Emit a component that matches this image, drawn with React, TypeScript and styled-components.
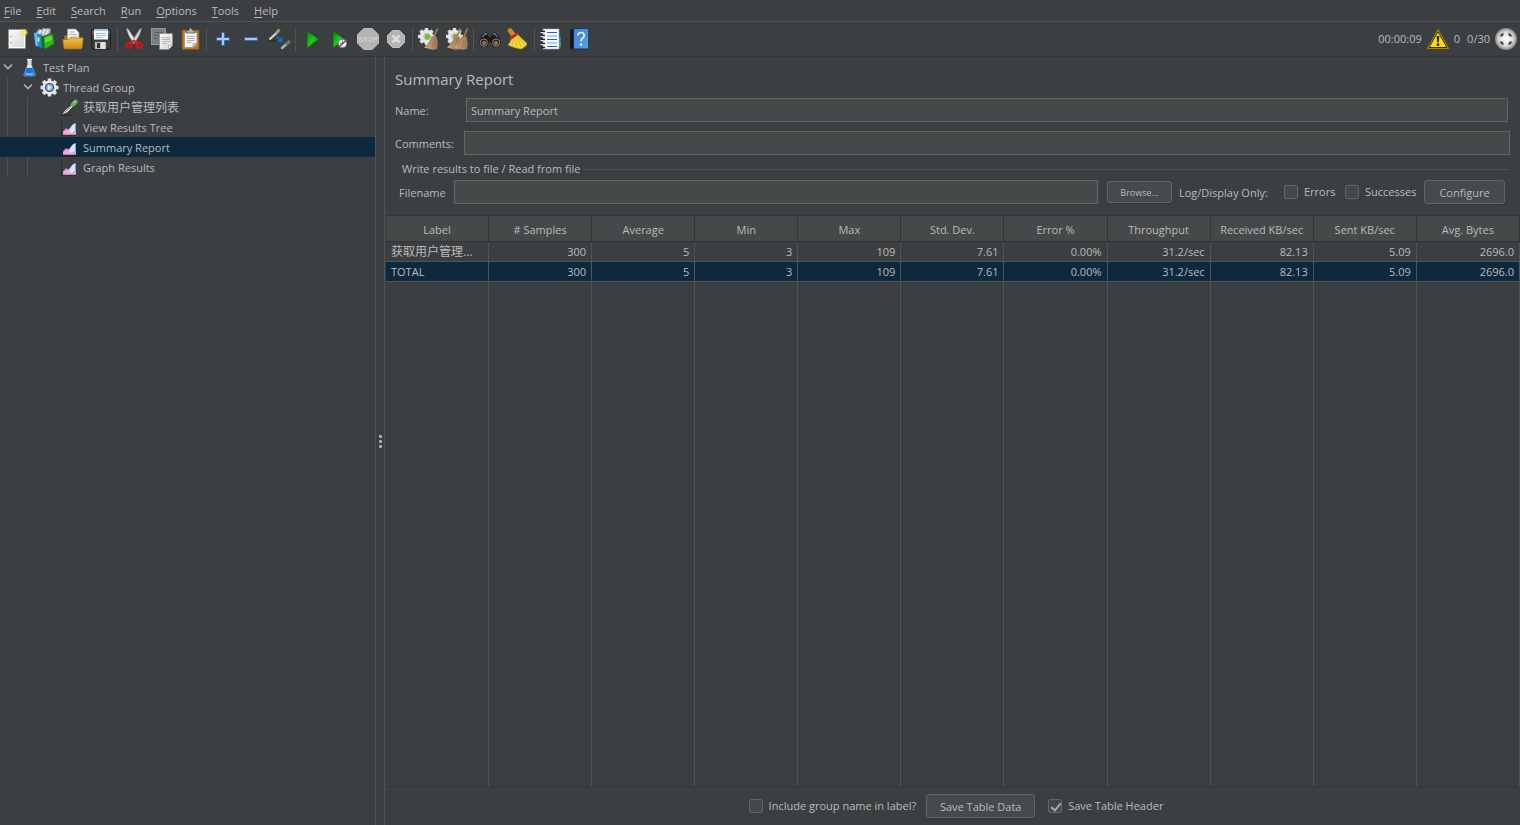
import React from "react";
import styled, { createGlobalStyle, css } from "styled-components";

const color = {
  bg: "#3c3f41",
  text: "#bbbbbb",
  line: "#515355",
  dark: "#323537",
  field: "#45494a",
  fieldLine: "#646666",
  selected: "#0d293e",
};

const GlobalStyle = createGlobalStyle`
  * { box-sizing: border-box; }
  body {
    margin: 0;
    background: ${color.bg};
    color: ${color.text};
    font: 11px/16px "Open Sans", "Noto Sans CJK SC", sans-serif;
  }
  button, input { font: inherit; color: inherit; }
  svg { display: block; flex: none; }
`;

const Window = styled.div`
  display: flex;
  flex-direction: column;
  min-height: 100vh;
`;

const MenuBar = styled.nav`
  display: flex;
  gap: 15px;
  height: 22px;
  padding: 0 4px;
  border-bottom: 1px solid ${color.line};
`;

const MenuButton = styled.button`
  padding: 0;
  border: 0;
  background: none;
  line-height: 20px;
  u { text-underline-offset: 2px; }
`;

const Toolbar = styled.div`
  display: flex;
  align-items: center;
  height: 35px;
  padding: 0 2px 0 3px;
  border-bottom: 1px solid ${color.dark};
`;

const ToolButton = styled.button`
  display: flex;
  justify-content: center;
  width: 28px;
  padding: 0;
  border: 0;
  background: none;
`;

const ToolSeparator = styled.span`
  width: 1px;
  height: 25px;
  margin: 0 2px;
  background: ${color.line};
`;

const Status = styled.div`
  display: flex;
  align-items: center;
  gap: 4px;
  margin-left: auto;
  line-height: 24px;
`;

const StatusCounts = styled.span`
  display: flex;
  gap: 7px;
`;

const Body = styled.div`
  display: flex;
  flex: 1;
`;

const Tree = styled.ul`
  width: 376px;
  flex: none;
  margin: 0;
  padding: 0;
  list-style: none;
  border-right: 1px solid ${color.line};
`;

const TreeRow = styled.li<{ $selected?: boolean }>`
  display: flex;
  align-items: center;
  height: 20px;
  background: ${(p) => (p.$selected ? color.selected : "transparent")};
`;

const Guide = styled.span<{ $hidden?: boolean }>`
  align-self: stretch;
  width: 13px;
  margin-left: 7px;
  border-left: 1px solid ${(p) => (p.$hidden ? "transparent" : color.line)};
`;

const Toggle = styled.span`
  width: 20px;
  padding-left: 3px;
`;

const NodeIcon = styled.span`
  width: 20px;
  margin-right: 3px;
`;

const NodeLabel = styled.span`
  padding-top: 2px;
`;

const Cjk = styled.span`
  font-size: 12px;
`;

const Splitter = styled.div`
  display: flex;
  flex-direction: column;
  align-items: center;
  justify-content: center;
  gap: 2px;
  width: 8px;
`;

const Dot = styled.span`
  width: 3px;
  height: 3px;
  border-radius: 1px;
  background: #afb1b3;
`;

const Panel = styled.main`
  display: flex;
  flex: 1;
  flex-direction: column;
  min-width: 0;
  padding-left: 1px;
  border-left: 1px solid ${color.line};
`;

const Form = styled.form`
  padding: 10px 10px 11px 9px;
`;

const Title = styled.h1`
  margin: 0 0 7px;
  font-size: 15px;
  font-weight: 400;
  line-height: 24px;
`;

const FieldRow = styled.div<{ $label: number; $end?: number }>`
  display: flex;
  align-items: center;
  margin-bottom: 9px;
  padding-right: ${(p) => p.$end ?? 0}px;
  label {
    flex: none;
    width: ${(p) => p.$label}px;
    padding-top: 2px;
  }
`;

const TextInput = styled.input`
  flex: 1;
  min-width: 0;
  height: 24px;
  padding: 0 4px;
  border: 1px solid ${color.fieldLine};
  border-radius: 0;
  background: ${color.field};
  outline: none;
`;

const FileGroup = styled.fieldset`
  min-width: 0;
  margin: -4px 1px 0 2px;
  padding: 2px 4px 0 2px;
  border: 0;
  border-top: 1px solid ${color.line};
  legend { padding: 0 3px; line-height: 18px; }
`;

const FileRow = styled.div`
  display: flex;
  align-items: center;
`;

const FileLabel = styled.label`
  width: 55px;
  padding-top: 2px;
`;

const PushButton = styled.button<{ $width: number; $small?: boolean }>`
  width: ${(p) => p.$width}px;
  height: 24px;
  padding: 1px 0 0;
  border: 1px solid ${color.fieldLine};
  border-radius: 3px;
  background: #454a4c;
  box-shadow: 0 1px 1px #35383a;
  line-height: 22px;
  ${(p) =>
    p.$small &&
    css`
      height: 22px;
      margin: 0 7px 0 9px;
      font-size: 9px;
      line-height: 20px;
    `}
`;

const LogLabel = styled.span`
  width: 105px;
  padding-top: 2px;
`;

const CheckLabel = styled.label<{ $width?: number }>`
  display: flex;
  align-items: center;
  gap: 6px;
  width: ${(p) => (p.$width ? `${p.$width}px` : "auto")};
`;

const Check = styled.input`
  position: relative;
  flex: none;
  width: 14px;
  height: 14px;
  margin: 0;
  appearance: none;
  border: 1px solid ${color.fieldLine};
  border-radius: 2px;
  background: #43494a;
  &:checked::before {
    content: "";
    position: absolute;
    left: 4px;
    top: 1px;
    width: 4px;
    height: 8px;
    border: solid #a7a9aa;
    border-width: 0 2px 2px 0;
    transform: rotate(40deg);
  }
`;

const TableArea = styled.div`
  display: flex;
  flex: 1;
  border-top: 1px solid ${color.dark};
  border-bottom: 1px solid ${color.dark};
`;

const DataTable = styled.table`
  width: 100%;
  table-layout: fixed;
  border-collapse: separate;
  border-spacing: 0;
  th {
    height: 26px;
    padding: 2px 0 0;
    border-right: 1px solid ${color.dark};
    border-bottom: 1px solid ${color.dark};
    background: ${color.field};
    font-weight: 400;
  }
  td {
    padding: 0 5px;
    border-right: 1px solid ${color.line};
    text-align: right;
    white-space: nowrap;
  }
  td:first-child { text-align: left; }
`;

const DataRow = styled.tr<{ $selected?: boolean }>`
  background: ${(p) => (p.$selected ? color.selected : "transparent")};
  td {
    height: 20px;
    border-bottom: 1px solid ${color.line};
  }
`;

const Footer = styled.footer`
  display: flex;
  align-items: center;
  justify-content: center;
  height: 38px;
  gap: 10px;
  padding-left: 6px;
  label:last-child { margin-left: 3px; }
`;

type IconProps = { children: React.ReactNode; size?: number };
const Icon = ({ children, size = 24 }: IconProps) => (
  <svg width={size} height={size} viewBox={`0 0 ${size} ${size}`} aria-hidden="true">
    {children}
  </svg>
);

const Definitions = styled.svg`
  position: absolute;
`;

const Gradients = () => (
  <Definitions width="0" height="0" aria-hidden="true">
    <defs>
      <linearGradient id="paper" x1="0" y1="0" x2="1" y2="1">
        <stop offset="0" stopColor="#fafafa" />
        <stop offset="1" stopColor="#d6d6d4" />
      </linearGradient>
      <linearGradient id="gold" x1="0" y1="0" x2="0" y2="1">
        <stop offset="0" stopColor="#f0c250" />
        <stop offset="1" stopColor="#c88a10" />
      </linearGradient>
      <linearGradient id="play" x1="0" y1="0" x2="1" y2="1">
        <stop offset="0" stopColor="#0a7a10" />
        <stop offset="0.5" stopColor="#1fc81f" />
        <stop offset="1" stopColor="#075c0a" />
      </linearGradient>
      <linearGradient id="straw" x1="0" y1="0" x2="1" y2="0">
        <stop offset="0" stopColor="#d2ab80" />
        <stop offset="1" stopColor="#a47a52" />
      </linearGradient>
      <linearGradient id="book" x1="0" y1="0" x2="1" y2="1">
        <stop offset="0" stopColor="#3f7fd0" />
        <stop offset="1" stopColor="#5aa0ea" />
      </linearGradient>
      <radialGradient id="ball">
        <stop offset="0" stopColor="#ffffff" />
        <stop offset="0.65" stopColor="#dcdcdc" />
        <stop offset="1" stopColor="#7f8183" />
      </radialGradient>
      <radialGradient id="sun">
        <stop offset="0" stopColor="#fffde0" />
        <stop offset="0.5" stopColor="#f4e04a" />
        <stop offset="1" stopColor="#e8d030" stopOpacity="0.2" />
      </radialGradient>
    </defs>
  </Definitions>
);

const NewIcon = () => (
  <Icon>
    <rect x="3.5" y="2.5" width="17" height="19" rx="0.5" fill="url(#paper)" stroke="#8d8f8c" />
    <path d="M4.5 3.500v17h15v-17z" fill="none" stroke="#fff" />
    <path d="M5 9.500h1.500M5 15.500h1.500" stroke="#8c8c8c" />
    <circle cx="19.200" cy="5.500" r="3.800" fill="url(#sun)" />
  </Icon>
);

const TemplatesIcon = () => (
  <Icon>
    <path d="M3 6l3-4 3 1 1-2 3 1 1.500-1 3 1-1 9H3z" fill="#b9bdbf" stroke="#83888a" strokeWidth="0.700" />
    <path d="M6 7l2-4M10 7l2-5M13 8l2-5" stroke="#eceeef" strokeWidth="1.400" />
    <path d="M1 6l8 1.500V21l-6.500-2.500z" fill="#1c8ccb" />
    <path d="M1 6l3 .6 1 13-2.500-1z" fill="#5fc0ee" />
    <path d="M5.500 10.500v4" stroke="#e8f6ff" strokeWidth="1.600" />
    <path d="M8 10l4-1.500V22l-3.500-2z" fill="#0f7a18" />
    <path d="M11 10l8.500-3 1.500 9.500L12 22z" fill="#34b41a" />
    <path d="M8 10l8.500-3.500 3 .5-8.500 3z" fill="#1d6a16" />
    <path d="M12 11l6.500-2.300.6 4L12 16z" fill="#62d63a" />
  </Icon>
);

const OpenIcon = () => (
  <Icon>
    <path d="M3 20V9.500l1.500-1.500h5l1.500 2h9.500V20z" fill="#a8740f" />
    <path d="M6.500 14V2h8l3.500 3.500V14z" fill="#f3f3f1" stroke="#9a9a98" strokeWidth="0.600" />
    <path d="M8.500 5h5M8.500 7.500h7M8.500 10h7" stroke="#b3b3b1" />
    <path d="M1.800 12.500h5.700l1.500-1.500h13.200l-1 9.500q-.2 1.500-1.700 1.500H4.500Q3 22 2.800 20.500z" fill="url(#gold)" stroke="#a8730c" strokeWidth="0.700" />
  </Icon>
);

const SaveIcon = () => (
  <Icon>
    <path d="M2.500 3.500q0-1 1-1h17q1 0 1 1V21q0 1-1 1H4l-1.500-1.500z" fill="#3b3e41" stroke="#1b1d1e" />
    <path d="M3.500 3.500h17v4h-17z" fill="#6d7174" />
    <rect x="5" y="2" width="14" height="10.500" fill="#f5f8fb" />
    <rect x="5" y="2" width="14" height="2" fill="#a9c4e2" />
    <path d="M7 6.500h10M7 8.500h10M7 10.500h6" stroke="#a6bfd8" />
    <rect x="6" y="15" width="11" height="7" fill="#b9bcbe" />
    <rect x="8" y="16" width="3" height="5" fill="#303335" />
    <rect x="12" y="15" width="4" height="7" fill="#dfe1e2" />
  </Icon>
);

const CutIcon = () => (
  <Icon>
    <path d="M4.500 1.500l1.500.5 8 12-2 2.500Q6 9 4.500 1.500z" fill="#e9e9e9" stroke="#9b9b9b" strokeWidth="0.600" />
    <path d="M19.500 1.500l-1.500.5-8 12 2 2.500q6-7.500 7.500-15z" fill="#d5d5d5" stroke="#8f8f8f" strokeWidth="0.600" />
    <ellipse cx="6.800" cy="18.500" rx="2.500" ry="2.400" fill="none" stroke="#d41414" strokeWidth="2.200" />
    <ellipse cx="17.200" cy="18.500" rx="2.500" ry="2.400" fill="none" stroke="#d41414" strokeWidth="2.200" />
    <path d="M8 16l4-2 4 2" fill="none" stroke="#e02020" strokeWidth="2.400" />
  </Icon>
);

const CopyIcon = () => (
  <Icon>
    <rect x="1.500" y="1.500" width="14" height="16" fill="#7b7e80" stroke="#97999a" />
    <path d="M4 5.500h9M4 8.500h5M4 11.500h4" stroke="#5c5f61" />
    <path d="M9.500 6.500h13v12l-4 4h-9z" fill="url(#paper)" stroke="#8b8b89" strokeWidth="0.800" />
    <path d="M12 10.500h8M12 12.500h8M12 14.500h8M12 16.500h5" stroke="#b5b5b3" />
    <path d="M22.500 18.500h-4v4z" fill="#fff" stroke="#9a9a98" strokeWidth="0.700" />
  </Icon>
);

const PasteIcon = () => (
  <Icon>
    <rect x="4" y="3" width="17" height="19.500" rx="1" fill="#b87a1c" stroke="#7e4f0c" strokeWidth="0.700" />
    <path d="M6.500 5.500h12.500v11l-4 4H6.500z" fill="#f6f6f4" stroke="#8a8a88" strokeWidth="0.700" />
    <path d="M9 9.500h7.500M9 11.500h7.500M9 13.500h7.500M9 15.500h4.500" stroke="#adadab" />
    <path d="M19 16.500h-4v4z" fill="#d0d0ce" stroke="#8a8a88" strokeWidth="0.600" />
    <path d="M8.500 6V3.500h2.500q.3-2.500 1.700-2.500t1.700 2.500H17V6z" fill="#b5b7b5" stroke="#555" strokeWidth="0.800" />
  </Icon>
);

const AddIcon = () => (
  <Icon>
    <path d="M10.500 5.500h3v5h5v3h-5v5h-3v-5h-5v-3h5z" fill="#a9c9f2" stroke="#3569b5" />
  </Icon>
);

const RemoveIcon = () => (
  <Icon>
    <rect x="5.500" y="10.500" width="13" height="3" fill="#a9c9f2" stroke="#3569b5" />
  </Icon>
);

const ToggleIcon = () => (
  <Icon>
    <path d="M1 13.500h9" stroke="#2c2e2f" strokeWidth="1.500" />
    <path d="M2.500 12.500L10 5.500" stroke="#d8dbd8" strokeWidth="2.200" />
    <path d="M9 6.500l3.500-4" stroke="#7fae66" strokeWidth="3" />
    <path d="M9 9l5 4.500M14.500 10v4H10.500" fill="none" stroke="#1f6fe0" strokeWidth="1.400" />
    <path d="M14.500 21.500L19 17.500" stroke="#9a9d9a" strokeWidth="3" />
    <path d="M19 17.500l4-3.500" stroke="#5f8a50" strokeWidth="3" />
    <path d="M14 22l5-4.500" stroke="#c9ccc9" />
  </Icon>
);

const StartIcon = () => (
  <Icon>
    <path d="M7 4l12 8.500L7 21z" fill="url(#play)" stroke="#0b5d0e" strokeWidth="0.600" />
  </Icon>
);

const StartNoPauseIcon = () => (
  <Icon>
    <path d="M5 4l12 8.500L5 21z" fill="url(#play)" stroke="#0b5d0e" strokeWidth="0.600" />
    <circle cx="14.500" cy="16.500" r="4.200" fill="#f0f5fc" stroke="#4a86cf" strokeWidth="1" />
    <path d="M14.500 13.500v3h-2.500" fill="none" stroke="#4a7ab0" />
    <path d="M10.500 20.500l8.500-8" stroke="#d81e1e" strokeWidth="1.300" />
  </Icon>
);

const StopIcon = () => (
  <Icon>
    <path d="M7.800 1.500h8.400l6.300 6.300v8.400l-6.300 6.300H7.800l-6.300-6.300V7.800z" fill="#b4b4b4" stroke="#bebebe" />
    <text x="12" y="15" textAnchor="middle" fontFamily="Liberation Sans, sans-serif" fontSize="7" fontWeight="700" fill="#cecece">
      STOP
    </text>
  </Icon>
);

const ShutdownIcon = () => (
  <Icon>
    <path d="M8.500 3.500h7l5 5v7l-5 5h-7l-5-5v-7z" fill="#b4b4b4" stroke="#c0c0c0" />
    <path d="M8.500 8.500l7 7M15.500 8.500l-7 7" stroke="#dcdcdc" strokeWidth="2.800" />
  </Icon>
);

const gearTeeth = (cx: number, cy: number, r: number, width: number) =>
  Array.from({ length: 8 }, (_, i) => (
    <rect key={i} x={cx - width / 2} y={cy - r} width={width} height={r} fill="#dfe1e3" transform={`rotate(${i * 45} ${cx} ${cy})`} />
  ));

const ClearGear = () => (
  <>
    {gearTeeth(9.5, 9.5, 8.5, 3.4)}
    <circle cx="9.500" cy="9.500" r="6.800" fill="#e6e8e9" />
    <circle cx="10" cy="9.500" r="3.800" fill="#c4c8ca" />
    <circle cx="10.500" cy="9.800" r="2.800" fill="#68c81e" />
  </>
);

const Broom = ({ x = 0 }: { x?: number }) => (
  <g transform={`translate(${x} 0)`}>
    <path d="M20.500 1.500L17 9.500" stroke="#a97c50" strokeWidth="1.800" />
    <path d="M14.500 9l5 .5 1.200 6-.7 6.500-4.500.7L7 20.500q5.500-4.500 7.500-11.500z" fill="url(#straw)" />
    <path d="M15.500 10.500l-4.500 9.500M17 11l-2 10.500M18.500 11l-.5 10.500" stroke="#8a6541" strokeWidth="0.500" />
  </g>
);

const ClearIcon = () => (
  <Icon>
    <ClearGear />
    <Broom />
  </Icon>
);

const ClearAllIcon = () => (
  <Icon>
    <ClearGear />
    <Broom x={-5} />
    <Broom x={2} />
  </Icon>
);

const SearchIcon = () => (
  <Icon>
    <path d="M4 7.500L7.500 5l3 2v3h3V7l3-2L20 7.500l3 8-2 4h-6.500L13 15h-2l-1.500 4.500H3L1 15.500z" fill="#17191a" />
    <path d="M4.500 10l3-3.500 1.500 1M19.500 10l-3-3.500-1.500 1" fill="none" stroke="#8e9496" strokeWidth="1.100" />
    <circle cx="5.800" cy="15.500" r="3.600" fill="#2a2320" stroke="#85898b" />
    <circle cx="18.200" cy="15.500" r="3.600" fill="#2a2320" stroke="#85898b" />
    <circle cx="6" cy="16" r="2" fill="#b36a3a" />
    <circle cx="18" cy="16" r="2" fill="#b36a3a" />
  </Icon>
);

const ResetSearchIcon = () => (
  <Icon>
    <path d="M4 3.500l3 4" stroke="#c98a2c" strokeWidth="4.600" strokeLinecap="round" />
    <path d="M11 7l9.500 9q.8 1 0 2-2 2.500-5 4-6-.5-13.500-4 3-3 3.500-7z" fill="#f0d838" stroke="#c29b10" strokeWidth="0.700" />
    <path d="M8 12l-2 6M10 11l0 9M11.500 10l3.500 10M12.500 10l6 7.500" stroke="#cfae22" strokeWidth="0.800" />
    <path d="M4.500 11.500l6.500-4.500" stroke="#c9251b" strokeWidth="2.800" />
  </Icon>
);

const FunctionIcon = () => (
  <Icon>
    <rect x="18" y="10" width="4" height="5" fill="#1f74d0" />
    <rect x="18" y="15" width="4" height="5" fill="#27a53a" />
    <rect x="4" y="2" width="16" height="20" fill="#fbfcfd" stroke="#a7abae" strokeWidth="0.600" />
    <path d="M8 5.500h10M8 12.500h10M8 19.500h10" stroke="#1b63c4" strokeWidth="1.200" />
    <path d="M8 9h10M8 16h10" stroke="#6fa1de" />
    <path d="M2 4.500h4M2 8.500h4M2 12.500h4M2 16.500h4M2 20.500h4" stroke="#1c1e1f" strokeWidth="1.600" />
    <path d="M1.500 5.500h3M1.500 9.500h3M1.500 13.500h3M1.500 17.500h3" stroke="#e4e6e7" />
  </Icon>
);

const HelpIcon = () => (
  <Icon>
    <path d="M3 3l2-1.500h15.500V21L19 22.500H3z" fill="#14304f" />
    <path d="M3 3l3-1v19.500H3z" fill="#0d1926" />
    <rect x="7" y="2" width="14" height="19.500" fill="url(#book)" />
    <path d="M10.700 8.500Q11 5.500 14 5.500t3.200 3q0 1.700-1.700 2.800Q14 12.300 14 14.200" fill="none" stroke="#e6f1fd" strokeWidth="1.700" />
    <circle cx="14" cy="17.500" r="1.200" fill="#e6f1fd" />
  </Icon>
);

const WarningIcon = () => (
  <Icon>
    <path d="M12 2.500L22.500 21.500H1.500z" fill="#f7cf10" stroke="#a88400" strokeWidth="1" strokeLinejoin="round" />
    <path d="M12 4.500L21 20.500H3z" fill="#fbd614" stroke="#2e2803" strokeWidth="1" strokeLinejoin="round" />
    <path d="M10.700 9h2.600l-.6 6.500h-1.400z" fill="#1d1a05" />
    <circle cx="12" cy="17.700" r="1.300" fill="#1d1a05" />
  </Icon>
);

const RemoteIcon = () => (
  <Icon>
    <circle cx="12" cy="12" r="11" fill="url(#ball)" />
    <path
      d="M5.500 9.500q.8-3 4-4v2.800l-1.200 1.200zM14.500 5.500q3 .8 4 4h-2.800l-1.200-1.200zM18.500 14.500q-.8 3-4 4v-2.800l1.200-1.200zM9.500 18.500q-3-.8-4-4h2.800l1.200 1.200z"
      fill="#4a4d4f"
    />
  </Icon>
);

const ChevronIcon = () => (
  <svg width="10" height="8" viewBox="0 0 10 8" aria-hidden="true">
    <path d="M1 1.500l4 4 4-4" fill="none" stroke="#afb1b3" strokeWidth="1.700" />
  </svg>
);

const FlaskIcon = () => (
  <Icon size={20}>
    <path d="M7.500 2h4v6l3.700 9.500q.3 1.500-1.200 1.500H5q-1.500 0-1.200-1.500L7.500 8z" fill="#cfdcea" stroke="#8fa3b8" strokeWidth="0.500" />
    <path d="M6.500 11h6l2.500 6.500q.3 1.200-1 1.200H5q-1.300 0-1-1.200z" fill="#1c6fe0" />
    <path d="M7 2.500h5M7.500 9h4" stroke="#f2f6fa" strokeWidth="1.200" />
    <path d="M6 15.500q3 1.500 7 0l.8 2q-4 1.500-8.500 0z" fill="#6ab4ff" />
  </Icon>
);

const GearIcon = () => (
  <Icon size={20}>
    {gearTeeth(9.5, 10.5, 9, 3.6)}
    <circle cx="9.500" cy="10.500" r="7" fill="#e6e8ea" />
    <circle cx="9.500" cy="10.500" r="4.600" fill="#23477d" />
    <circle cx="9.500" cy="10.500" r="3.400" fill="#8fb4e4" />
    <path d="M8 8.300l3.800 2.200L8 12.700z" fill="#f4f8ff" />
  </Icon>
);

const SamplerIcon = () => (
  <Icon size={20}>
    <path d="M0 18.500h12" stroke="#2b2d2e" strokeWidth="1.200" />
    <path d="M1.500 18l3-4.500 7-6 2 2-6.500 6.500z" fill="#d9dcd9" stroke="#26292a" strokeWidth="0.800" />
    <path d="M5 15l6.500-6" stroke="#8d918e" />
    <path d="M10.500 6l4.500 4.500" stroke="#2c5a26" strokeWidth="1.600" />
    <path d="M13 7.500l2.700-2.700" stroke="#6cae58" strokeWidth="4.400" strokeLinecap="round" />
    <path d="M13 6l2.500-2" stroke="#a8d898" strokeWidth="1.200" />
  </Icon>
);

const ListenerIcon = () => (
  <Icon size={20}>
    <path d="M1.500 3v15M1.500 18.500h15" stroke="#24272a" strokeDasharray="2 1" />
    <path d="M3 17.800v-3l3-3 2.500.700 1.500-1 6 2.500v3.800z" fill="#f2a6dc" />
    <path d="M3 14.500l3-2.800 2.500.8 1.500-1" fill="none" stroke="#cf74ba" />
    <path d="M9.500 14.500Q9.500 8.500 15.500 6v8l-3 2.500z" fill="#d3e7fa" />
    <path d="M15.500 6v8l-3 2.500" fill="none" stroke="#6fa4dc" />
  </Icon>
);

const menus = ["File", "Edit", "Search", "Run", "Options", "Tools", "Help"];

const tools: { label: string; icon: React.FC }[][] = [
  [
    { label: "New", icon: NewIcon },
    { label: "Templates", icon: TemplatesIcon },
    { label: "Open", icon: OpenIcon },
    { label: "Save", icon: SaveIcon },
  ],
  [
    { label: "Cut", icon: CutIcon },
    { label: "Copy", icon: CopyIcon },
    { label: "Paste", icon: PasteIcon },
  ],
  [
    { label: "Expand All", icon: AddIcon },
    { label: "Collapse All", icon: RemoveIcon },
    { label: "Toggle", icon: ToggleIcon },
  ],
  [
    { label: "Start", icon: StartIcon },
    { label: "Start no pauses", icon: StartNoPauseIcon },
    { label: "Stop", icon: StopIcon },
    { label: "Shutdown", icon: ShutdownIcon },
  ],
  [
    { label: "Clear", icon: ClearIcon },
    { label: "Clear All", icon: ClearAllIcon },
  ],
  [
    { label: "Search tree", icon: SearchIcon },
    { label: "Reset Search", icon: ResetSearchIcon },
  ],
  [
    { label: "Function Helper", icon: FunctionIcon },
    { label: "Help", icon: HelpIcon },
  ],
];

type TreeNode = { label: React.ReactNode; depth: number; icon: React.FC; open?: boolean; selected?: boolean };
const nodes: TreeNode[] = [
  { label: "Test Plan", depth: 0, icon: FlaskIcon, open: true },
  { label: "Thread Group", depth: 1, icon: GearIcon, open: true },
  { label: <Cjk>获取用户管理列表</Cjk>, depth: 2, icon: SamplerIcon },
  { label: "View Results Tree", depth: 2, icon: ListenerIcon },
  { label: "Summary Report", depth: 2, icon: ListenerIcon, selected: true },
  { label: "Graph Results", depth: 2, icon: ListenerIcon },
];

const columns = [
  "Label", "# Samples", "Average", "Min", "Max", "Std. Dev.",
  "Error %", "Throughput", "Received KB/sec", "Sent KB/sec", "Avg. Bytes",
];
const values = ["300", "5", "3", "109", "7.61", "0.00%", "31.2/sec", "82.13", "5.09", "2696.0"];

export default function App() {
  return (
    <Window>
      <GlobalStyle />
      <Gradients />
      <MenuBar>
        {menus.map((name) => (
          <MenuButton key={name}>
            <u>{name[0]}</u>
            {name.slice(1)}
          </MenuButton>
        ))}
      </MenuBar>
      <Toolbar>
        {tools.map((group, i) => (
          <React.Fragment key={i}>
            {i > 0 && <ToolSeparator />}
            {group.map(({ label, icon: Glyph }) => (
              <ToolButton key={label} aria-label={label}>
                <Glyph />
              </ToolButton>
            ))}
          </React.Fragment>
        ))}
        <Status>
          <span>00:00:09</span>
          <WarningIcon />
          <StatusCounts>
            <span>0</span>
            <span>0/30</span>
          </StatusCounts>
          <RemoteIcon />
        </Status>
      </Toolbar>
      <Body>
        <Tree>
          {nodes.map(({ label, depth, icon: Glyph, open, selected }, i) => (
            <TreeRow key={i} $selected={selected}>
              {Array.from({ length: depth }, (_, level) => (
                <Guide key={level} $hidden={selected} />
              ))}
              <Toggle>{open && <ChevronIcon />}</Toggle>
              <NodeIcon>
                <Glyph />
              </NodeIcon>
              <NodeLabel>{label}</NodeLabel>
            </TreeRow>
          ))}
        </Tree>
        <Splitter>
          <Dot />
          <Dot />
          <Dot />
        </Splitter>
        <Panel>
          <Form onSubmit={(e) => e.preventDefault()}>
            <Title>Summary Report</Title>
            <FieldRow $label={71} $end={2}>
              <label htmlFor="name">Name:</label>
              <TextInput id="name" defaultValue="Summary Report" />
            </FieldRow>
            <FieldRow $label={69}>
              <label htmlFor="comments">Comments:</label>
              <TextInput id="comments" />
            </FieldRow>
            <FileGroup>
              <legend>Write results to file / Read from file</legend>
              <FileRow>
                <FileLabel htmlFor="filename">Filename</FileLabel>
                <TextInput id="filename" />
                <PushButton type="button" $width={65} $small>Browse...</PushButton>
                <LogLabel>Log/Display Only:</LogLabel>
                <CheckLabel $width={61}>
                  <Check type="checkbox" />
                  Errors
                </CheckLabel>
                <CheckLabel $width={79}>
                  <Check type="checkbox" />
                  Successes
                </CheckLabel>
                <PushButton type="button" $width={81}>Configure</PushButton>
              </FileRow>
            </FileGroup>
          </Form>
          <TableArea>
            <DataTable>
              <thead>
                <tr>
                  {columns.map((name) => (
                    <th key={name} scope="col">{name}</th>
                  ))}
                </tr>
              </thead>
              <tbody>
                <DataRow>
                  <td><Cjk>获取用户管理...</Cjk></td>
                  {values.map((value, i) => (
                    <td key={i}>{value}</td>
                  ))}
                </DataRow>
                <DataRow $selected>
                  <td>TOTAL</td>
                  {values.map((value, i) => (
                    <td key={i}>{value}</td>
                  ))}
                </DataRow>
                <tr>
                  {columns.map((name) => (
                    <td key={name} />
                  ))}
                </tr>
              </tbody>
            </DataTable>
          </TableArea>
          <Footer>
            <CheckLabel>
              <Check type="checkbox" />
              Include group name in label?
            </CheckLabel>
            <PushButton type="button" $width={109}>Save Table Data</PushButton>
            <CheckLabel>
              <Check type="checkbox" defaultChecked />
              Save Table Header
            </CheckLabel>
          </Footer>
        </Panel>
      </Body>
    </Window>
  );
}
